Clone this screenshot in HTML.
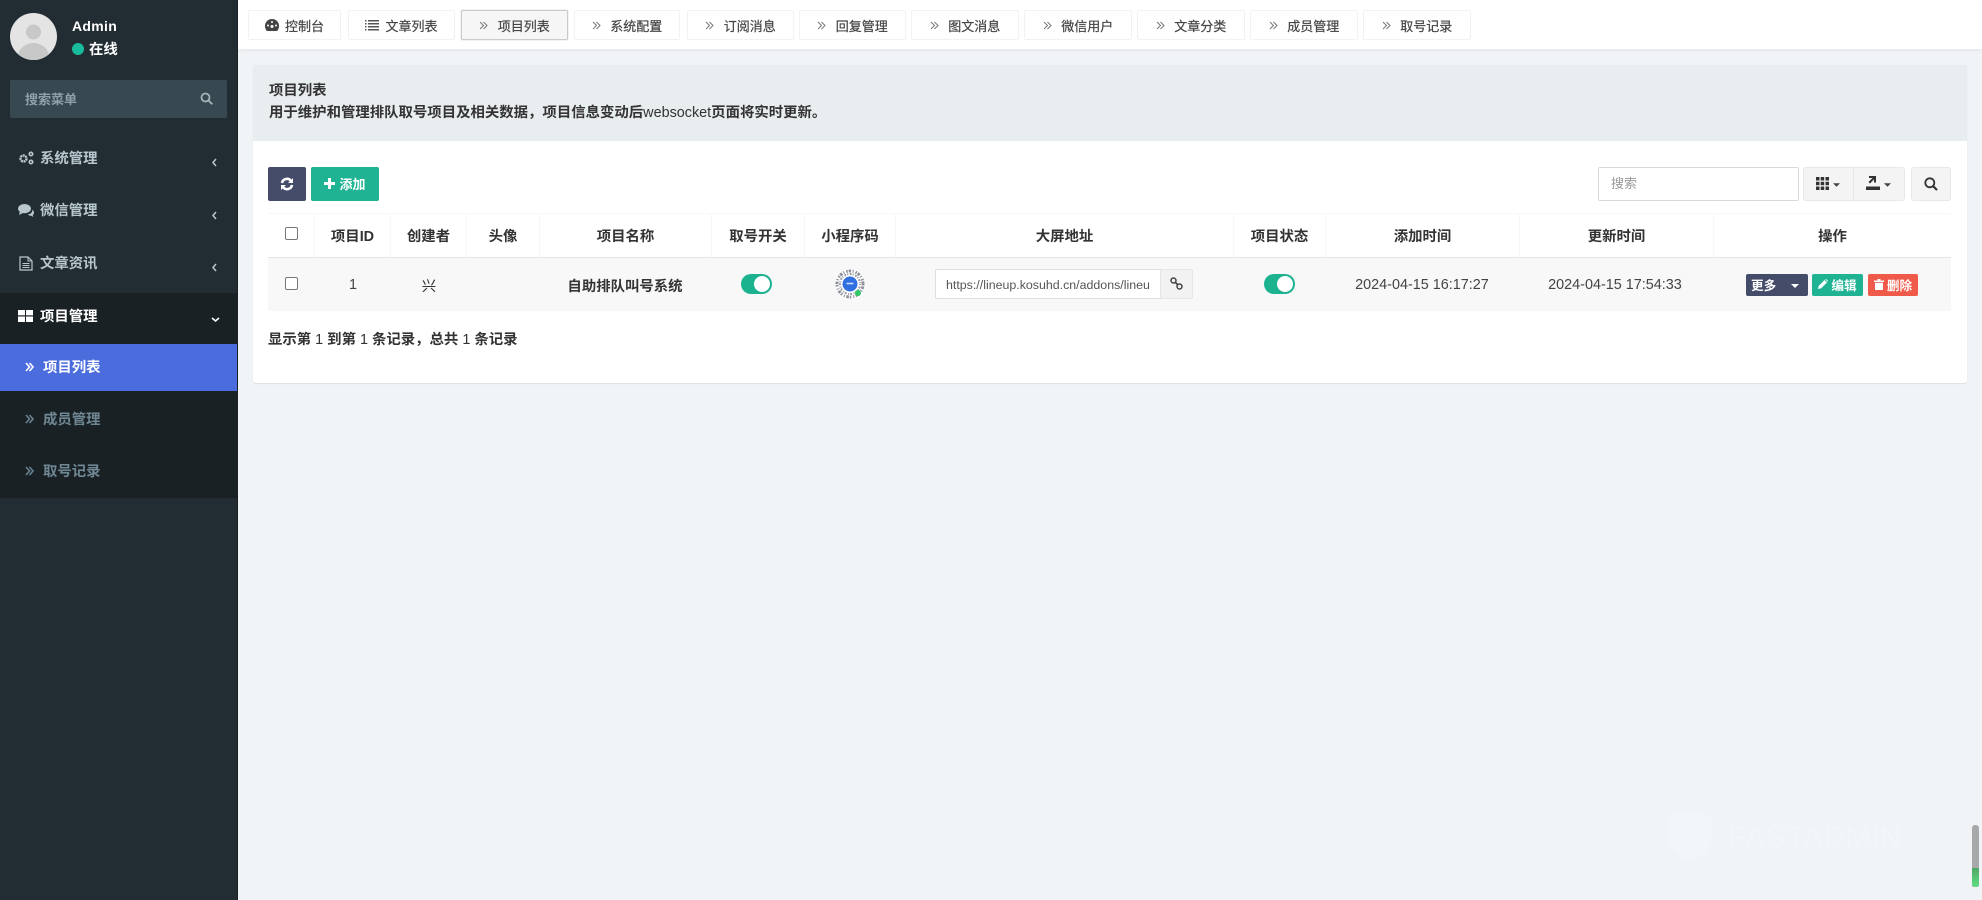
<!DOCTYPE html>
<html lang="zh-CN"><head><meta charset="utf-8"><title>项目列表</title>
<style>
*{box-sizing:border-box}
html,body{margin:0;padding:0;width:1982px;height:900px;overflow:hidden;background:#f0f4f7;font-family:"Liberation Sans","Noto Sans CJK SC",sans-serif;color:#333;font-size:14.4px}
.a{position:absolute}
.t{position:absolute;white-space:nowrap;line-height:20px}
svg{display:block}
.m{font-weight:700;color:#b8c7ce;font-size:14.4px}
.tab{position:absolute;top:10px;height:30px;background:#fff;border:1px solid #f0f2f4;border-radius:2px;display:flex;align-items:center;justify-content:center;font-size:13px;color:#444;gap:6px;white-space:nowrap;-webkit-text-stroke:.2px #444}
.tab.on{background:#f6f6f6;border:1px solid #c8cbce;box-shadow:0 0 1px #aaa}
.th{position:absolute;top:213px;height:45px;display:flex;align-items:center;justify-content:center;font-weight:700;font-size:14.4px;color:#333;border-right:1px solid #f6f7f8}
.td{position:absolute;top:258px;height:53px;display:flex;align-items:center;justify-content:center;font-size:14.4px;color:#444;padding-top:1px}
.cb{position:absolute;width:13px;height:13px;background:#fff;border:1px solid #777;border-radius:2px}
.tg{position:absolute;width:31px;height:20px;border-radius:10px;background:#1cb28f}
.tg:after{content:"";position:absolute;right:2px;top:2px;width:16px;height:16px;border-radius:8px;background:#fff}
.bt{position:absolute;display:flex;align-items:center;justify-content:center;border-radius:2px;color:#fff;font-weight:700;white-space:nowrap}
</style></head><body>

<!-- sidebar -->
<div class="a" style="left:0;top:0;width:237px;height:900px;background:#222d33"></div>
<div class="a" style="left:237px;top:0;width:1px;height:900px;background:#1a2024"></div>
<div class="a" style="left:0;top:293px;width:237px;height:205px;background:#1a2125"></div>
<div class="a" style="left:0;top:344px;width:237px;height:47px;background:#4a6cdc"></div>

<svg class="a" style="left:10px;top:13px" width="47" height="47" viewBox="0 0 47 47"><defs><clipPath id="av"><circle cx="23.5" cy="23.5" r="23.5"/></clipPath></defs><g clip-path="url(#av)"><rect width="47" height="47" fill="#e4e4e4"/><circle cx="23.5" cy="19" r="7.5" fill="#c8c8c8"/><ellipse cx="23.5" cy="45" rx="16" ry="15" fill="#c8c8c8"/></g></svg>
<div class="t" style="left:72px;top:16px;color:#fff;font-weight:700;font-size:14px;letter-spacing:.3px">Admin</div>
<div class="a" style="left:72px;top:43px;width:12px;height:12px;border-radius:6px;background:#18bc9c"></div>
<div class="t" style="left:89px;top:40px;color:#fff;font-weight:700;font-size:14.4px">在线</div>

<div class="a" style="left:10px;top:80px;width:217px;height:38px;background:#374850;border-radius:2px"></div>
<div class="t" style="left:25px;top:90px;color:#8fa0a8;font-size:13px;font-weight:700">搜索菜单</div>
<svg class="a" style="left:200px;top:92px" width="13" height="13" viewBox="0 0 13 13" fill="none" stroke="#a7b5bb" stroke-width="1.800"><circle cx="5.5" cy="5.5" r="4"/><path d="M8.5 8.5L12.3 12.3"/></svg>

<!-- menu -->
<svg class="a" style="left:18px;top:151px" width="16" height="14" viewBox="0 0 16 14" fill="none" stroke="#b8c7ce"><circle cx="5.5" cy="7.5" r="3" stroke-width="2.4" stroke-dasharray="2 .6"/><circle cx="13" cy="3" r="1.7" stroke-width="1.6"/><circle cx="13" cy="11" r="1.7" stroke-width="1.6"/></svg>
<div class="t m" style="left:40px;top:149px">系统管理</div>
<svg class="a" style="left:18px;top:204px" width="16" height="13" viewBox="0 0 16 13" fill="#b8c7ce"><ellipse cx="6.5" cy="4.6" rx="6.5" ry="4.6"/><path d="M2 7L1 11L6 8.5z"/><path d="M10 10.4c3-.4 4.4-2 4.4-4.6 1 .7 1.6 1.7 1.6 2.8 0 1-.5 1.800-1.300 2.400l.6 1.900-2.700-1.300c-.9.2-1.800.1-2.600-1.200z"/></svg>
<div class="t m" style="left:40px;top:201px">微信管理</div>
<svg class="a" style="left:19px;top:256px" width="14" height="15" viewBox="0 0 14 15" fill="none" stroke="#b8c7ce" stroke-width="1.2"><path d="M1 1h8l4 4v9H1z"/><path d="M9 1v4h4M3.500 7.500h7M3.500 9.500h7M3.500 11.500h7" stroke-width="1"/></svg>
<div class="t m" style="left:40px;top:254px">文章资讯</div>
<svg class="a" style="left:18px;top:310px" width="15" height="12" viewBox="0 0 15 12" fill="#fff"><rect width="7" height="5.300"/><rect x="8" width="7" height="5.300"/><rect y="6.500" width="7" height="5.500"/><rect x="8" y="6.500" width="7" height="5.500"/></svg>
<div class="t" style="left:40px;top:307px;font-weight:700;color:#fff;font-size:14.4px">项目管理</div>

<svg class="a" style="left:211px;top:157px" width="7" height="11" viewBox="0 0 7 11" fill="none" stroke="#b8c7ce" stroke-width="1.500"><path d="M5 2L2 5.500l3 3.500"/></svg>
<svg class="a" style="left:211px;top:210px" width="7" height="11" viewBox="0 0 7 11" fill="none" stroke="#b8c7ce" stroke-width="1.500"><path d="M5 2L2 5.500l3 3.500"/></svg>
<svg class="a" style="left:211px;top:262px" width="7" height="11" viewBox="0 0 7 11" fill="none" stroke="#b8c7ce" stroke-width="1.500"><path d="M5 2L2 5.500l3 3.500"/></svg>
<svg class="a" style="left:210px;top:316px" width="11" height="7" viewBox="0 0 11 7" fill="none" stroke="#fff" stroke-width="1.600"><path d="M2 2l3.500 3 3.500-3"/></svg>

<svg class="a" style="left:25px;top:362px" width="9" height="10" viewBox="0 0 9 10" fill="none" stroke="#fff" stroke-width="1.600"><path d="M1 1l3.500 4L1 9M4.500 1L8 5 4.500 9"/></svg>
<div class="t" style="left:43px;top:358px;color:#fff;font-weight:700;font-size:14.4px">项目列表</div>
<svg class="a" style="left:25px;top:414px" width="9" height="10" viewBox="0 0 9 10" fill="none" stroke="#668090" stroke-width="1.600"><path d="M1 1l3.500 4L1 9M4.500 1L8 5 4.500 9"/></svg>
<div class="t" style="left:43px;top:410px;color:#6e8792;font-weight:700;font-size:14.4px">成员管理</div>
<svg class="a" style="left:25px;top:466px" width="9" height="10" viewBox="0 0 9 10" fill="none" stroke="#668090" stroke-width="1.600"><path d="M1 1l3.500 4L1 9M4.500 1L8 5 4.500 9"/></svg>
<div class="t" style="left:43px;top:462px;color:#6e8792;font-weight:700;font-size:14.4px">取号记录</div>

<!-- top bar -->
<div class="a" style="left:238px;top:0;width:1744px;height:49px;background:#fff;box-shadow:0 1px 5px rgba(0,0,0,.07)"></div>
<div class="tab" style="left:248px;width:93px"><svg width="14" height="12" viewBox="0 0 14 12" fill="#444"><path d="M7 0a7 7 0 0 0-7 7c0 2 .7 3.700 2 5h10c1.300-1.300 2-3 2-5a7 7 0 0 0-7-7z"/><circle cx="7" cy="7.500" r="1.500" fill="#fff"/><circle cx="3" cy="6.500" r="1" fill="#fff"/><circle cx="11" cy="6.500" r="1" fill="#fff"/><circle cx="7" cy="3" r="1" fill="#fff"/></svg>控制台</div>
<div class="tab" style="left:348px;width:107px"><svg width="14" height="11" viewBox="0 0 14 11" fill="#555"><path d="M0 0h1.500v1.500H0zM3 0h11v1.500H3zM0 3h1.500v1.500H0zM3 3h11v1.500H3zM0 6h1.500v1.500H0zM3 6h11v1.500H3zM0 9h1.500v1.500H0zM3 9h11v1.500H3z"/></svg>文章列表</div>
<div class="tab on" style="left:461px;width:107px"><svg width="9" height="9" viewBox="0 0 9 9" fill="none" stroke="#777" stroke-width="1"><path d="M1 1l3.500 3.500L1 8M4.500 1L8 4.500 4.500 8"/></svg>&nbsp;项目列表</div>
<div class="tab" style="left:574px;width:106px"><svg width="9" height="9" viewBox="0 0 9 9" fill="none" stroke="#777" stroke-width="1"><path d="M1 1l3.500 3.500L1 8M4.500 1L8 4.500 4.500 8"/></svg>&nbsp;系统配置</div>
<div class="tab" style="left:687px;width:107px"><svg width="9" height="9" viewBox="0 0 9 9" fill="none" stroke="#777" stroke-width="1"><path d="M1 1l3.500 3.500L1 8M4.500 1L8 4.500 4.500 8"/></svg>&nbsp;订阅消息</div>
<div class="tab" style="left:799px;width:107px"><svg width="9" height="9" viewBox="0 0 9 9" fill="none" stroke="#777" stroke-width="1"><path d="M1 1l3.500 3.500L1 8M4.500 1L8 4.500 4.500 8"/></svg>&nbsp;回复管理</div>
<div class="tab" style="left:911px;width:108px"><svg width="9" height="9" viewBox="0 0 9 9" fill="none" stroke="#777" stroke-width="1"><path d="M1 1l3.500 3.500L1 8M4.500 1L8 4.500 4.500 8"/></svg>&nbsp;图文消息</div>
<div class="tab" style="left:1024px;width:108px"><svg width="9" height="9" viewBox="0 0 9 9" fill="none" stroke="#777" stroke-width="1"><path d="M1 1l3.500 3.500L1 8M4.500 1L8 4.500 4.500 8"/></svg>&nbsp;微信用户</div>
<div class="tab" style="left:1137px;width:108px"><svg width="9" height="9" viewBox="0 0 9 9" fill="none" stroke="#777" stroke-width="1"><path d="M1 1l3.500 3.500L1 8M4.500 1L8 4.500 4.500 8"/></svg>&nbsp;文章分类</div>
<div class="tab" style="left:1250px;width:108px"><svg width="9" height="9" viewBox="0 0 9 9" fill="none" stroke="#777" stroke-width="1"><path d="M1 1l3.500 3.500L1 8M4.500 1L8 4.500 4.500 8"/></svg>&nbsp;成员管理</div>
<div class="tab" style="left:1363px;width:108px"><svg width="9" height="9" viewBox="0 0 9 9" fill="none" stroke="#777" stroke-width="1"><path d="M1 1l3.500 3.500L1 8M4.500 1L8 4.500 4.500 8"/></svg>&nbsp;取号记录</div>

<!-- panel -->
<div class="a" style="left:253px;top:65px;width:1714px;height:318px;background:#fff;border-radius:3px;box-shadow:0 1px 1px rgba(0,0,0,.08)"></div>
<div class="a" style="left:253px;top:65px;width:1714px;height:76px;background:#e8edf0"></div>
<div class="t" style="left:269px;top:81px;font-weight:700;font-size:14.4px;color:#333">项目列表</div>
<div class="t" style="left:269px;top:103px;font-weight:700;font-size:14.4px;color:#333">用于维护和管理排队取号项目及相关数据，项目信息变动后<span style="font-weight:400">websocket</span>页面将实时更新。</div>

<!-- toolbar -->
<div class="bt" style="left:268px;top:167px;width:38px;height:34px;background:#444c69"><svg width="14" height="14" viewBox="0 0 14 14" fill="none" stroke="#fff" stroke-width="2.600"><path d="M2 6a5 5 0 0 1 9-2M12 8a5 5 0 0 1-9 2"/><path d="M13 1v5H8zM1 13V8h5z" stroke="none" fill="#fff"/></svg></div>
<div class="bt" style="left:311px;top:167px;width:68px;height:34px;background:#1fb394;font-size:13px;padding-bottom:2px"><svg width="11" height="11" viewBox="0 0 11 11" fill="#fff" style="margin-right:4px"><path d="M4 0h3v4h4v3H7v4H4V7H0V4h4z"/></svg>添加</div>

<div class="a" style="left:1598px;top:167px;width:201px;height:34px;background:#fff;border:1px solid #d9d9d9;border-radius:2px"></div>
<div class="t" style="left:1611px;top:174px;font-size:13px;color:#999">搜索</div>
<div class="a" style="left:1803px;top:167px;width:51px;height:34px;background:#f4f4f4;border:1px solid #e8e8e8;border-radius:3px 0 0 3px"></div>
<div class="a" style="left:1853px;top:167px;width:52px;height:34px;background:#f4f4f4;border:1px solid #e8e8e8;border-radius:0 3px 3px 0"></div>
<div class="a" style="left:1911px;top:167px;width:40px;height:34px;background:#f4f4f4;border:1px solid #e8e8e8;border-radius:3px"></div>
<svg class="a" style="left:1816px;top:177px" width="13" height="13" viewBox="0 0 13 13" fill="#333"><path d="M0 0h3.500v3.500H0zM4.700 0h3.500v3.500H4.700zM9.500 0H13v3.500H9.500zM0 4.700h3.500v3.500H0zM4.700 4.700h3.500v3.500H4.700zM9.500 4.700H13v3.500H9.500zM0 9.500h3.500V13H0zM4.700 9.500h3.500V13H4.700zM9.500 9.500H13V13H9.500z"/></svg>
<svg class="a" style="left:1833px;top:183px" width="7" height="4" viewBox="0 0 8 4" fill="#444"><path d="M0 0h8L4 4z"/></svg>
<svg class="a" style="left:1866px;top:176px" width="14" height="14" viewBox="0 0 14 14" fill="#333"><path d="M0 10.500h14V14H0z"/><path d="M3 0h7v6.500H8V3.400L4 7.500 2.500 6l4-4H3z"/></svg>
<svg class="a" style="left:1884px;top:183px" width="7" height="4" viewBox="0 0 8 4" fill="#444"><path d="M0 0h8L4 4z"/></svg>
<svg class="a" style="left:1924px;top:177px" width="14" height="14" viewBox="0 0 14 14" fill="none" stroke="#333" stroke-width="1.800"><circle cx="5.800" cy="5.800" r="4.500"/><path d="M9 9l4 4" stroke-width="2.200"/></svg>

<!-- table -->
<div class="a" style="left:268px;top:213px;width:1683px;height:45px;border-top:1px solid #f6f7f8;border-bottom:1px solid #e3e5e7"></div>
<div class="a" style="left:268px;top:258px;width:1683px;height:53px;background:#f8f8f8"></div>
<div class="th" style="left:268px;width:47px"></div>
<div class="th" style="left:315px;width:76px">项目ID</div>
<div class="th" style="left:391px;width:76px">创建者</div>
<div class="th" style="left:467px;width:73px">头像</div>
<div class="th" style="left:540px;width:172px">项目名称</div>
<div class="th" style="left:712px;width:93px">取号开关</div>
<div class="th" style="left:805px;width:91px">小程序码</div>
<div class="th" style="left:896px;width:338px">大屏地址</div>
<div class="th" style="left:1234px;width:92px">项目状态</div>
<div class="th" style="left:1326px;width:194px">添加时间</div>
<div class="th" style="left:1520px;width:194px">更新时间</div>
<div class="th" style="left:1714px;width:237px;border-right:0">操作</div>

<div class="cb" style="left:285px;top:227px"></div>
<div class="cb" style="left:285px;top:277px"></div>
<div class="td" style="left:315px;width:76px">1</div>
<div class="td" style="left:391px;width:76px;color:#333">兴</div>
<div class="td" style="left:540px;width:170px;font-weight:700;color:#333">自助排队叫号系统</div>
<div class="tg" style="left:741px;top:274px"></div>

<svg class="a" style="left:834px;top:268px" width="32" height="32" viewBox="0 0 32 32"><circle cx="16" cy="16" r="15" fill="#fff"/><circle cx="16" cy="16" r="13" fill="none" stroke="#8a8f98" stroke-width="3" stroke-dasharray="1.500 1 2.500 1.500 1 2"/><circle cx="16" cy="16" r="10" fill="none" stroke="#9a9ea6" stroke-width="2" stroke-dasharray="1 1.500 2 1"/><circle cx="16" cy="16" r="7.500" fill="#2f6fe0"/><path d="M12.500 15.500h7" stroke="#cfe0ff" stroke-width="1.500"/><circle cx="24" cy="25" r="3" fill="#2ec866"/></svg>

<div class="a" style="left:935px;top:269px;width:226px;height:30px;background:#fff;border:1px solid #dedede;border-radius:2px 0 0 2px"></div>
<div class="a" style="left:946px;top:270px;width:203px;height:30px;line-height:30px;font-size:12.4px;color:#555;overflow:hidden;white-space:nowrap">https://lineup.kosuhd.cn/addons/lineup</div>
<div class="a" style="left:1160px;top:269px;width:33px;height:30px;background:#f2f2f2;border:1px solid #e6e6e6;border-radius:0 2px 2px 0"></div>
<svg class="a" style="left:1170px;top:277px" width="13" height="13" viewBox="0 0 13 13" fill="none" stroke="#444" stroke-width="1.500"><circle cx="3.500" cy="3.500" r="2.500"/><circle cx="9.500" cy="9.500" r="2.500"/><path d="M5 5l3 3" stroke-width="1.800"/></svg>

<div class="tg" style="left:1264px;top:274px"></div>
<div class="td" style="left:1325px;width:194px">2024-04-15 16:17:27</div>
<div class="td" style="left:1518px;width:194px">2024-04-15 17:54:33</div>

<div class="bt" style="left:1746px;top:274px;width:62px;height:22px;background:#444c69;font-size:12.6px;justify-content:flex-start;padding:0 0 2px 5px">更多</div>
<svg class="a" style="left:1791px;top:284px" width="8" height="4" viewBox="0 0 8 4" fill="#fff"><path d="M0 0h8L4 4z"/></svg>
<div class="bt" style="left:1812px;top:274px;width:51px;height:22px;background:#1fb394;font-size:12.6px;padding-bottom:2px"><svg width="10" height="10" viewBox="0 0 10 10" fill="#fff" style="margin-right:3px"><path d="M0 10l.6-3L6.500 1 9 3.500 3 9.400zM7.200.400l.9-.4 1.900 1.900-.4.900z"/></svg>编辑</div>
<div class="bt" style="left:1868px;top:274px;width:50px;height:22px;background:#f05a4a;font-size:12.6px;padding-bottom:2px"><svg width="10" height="11" viewBox="0 0 10 11" fill="#fff" style="margin-right:3px"><path d="M0 1.500h3.500V0h3v1.500H10V3H0zM1 3.800h8V11H1z"/></svg>删除</div>

<div class="t" style="left:268px;top:330px;font-weight:700;font-size:14.4px;color:#333">显示第 <span style="font-weight:400">1</span> 到第 <span style="font-weight:400">1</span> 条记录，总共 <span style="font-weight:400">1</span> 条记录</div>

<!-- watermark + scroll indicator -->
<svg class="a" style="left:1668px;top:810px" width="44" height="52" viewBox="0 0 44 52" fill="#f3f6f8"><path d="M22 0c8 3 14 5 22 5v20c0 14-10 22-22 27C10 47 0 39 0 25V5c8 0 14-2 22-5z"/></svg>
<div class="t" style="left:1728px;top:826px;font-size:30px;line-height:24px;color:#f3f6f8;letter-spacing:.5px">FASTADMIN</div>
<div class="a" style="left:1972px;top:825px;width:7px;height:62px;background:#a6a8aa;border-radius:3px 3px 2px 2px"></div>
<div class="a" style="left:1972px;top:868px;width:7px;height:19px;background:linear-gradient(#4fa867,#5ee07f);border-radius:0 0 3px 3px"></div>
</body></html>
